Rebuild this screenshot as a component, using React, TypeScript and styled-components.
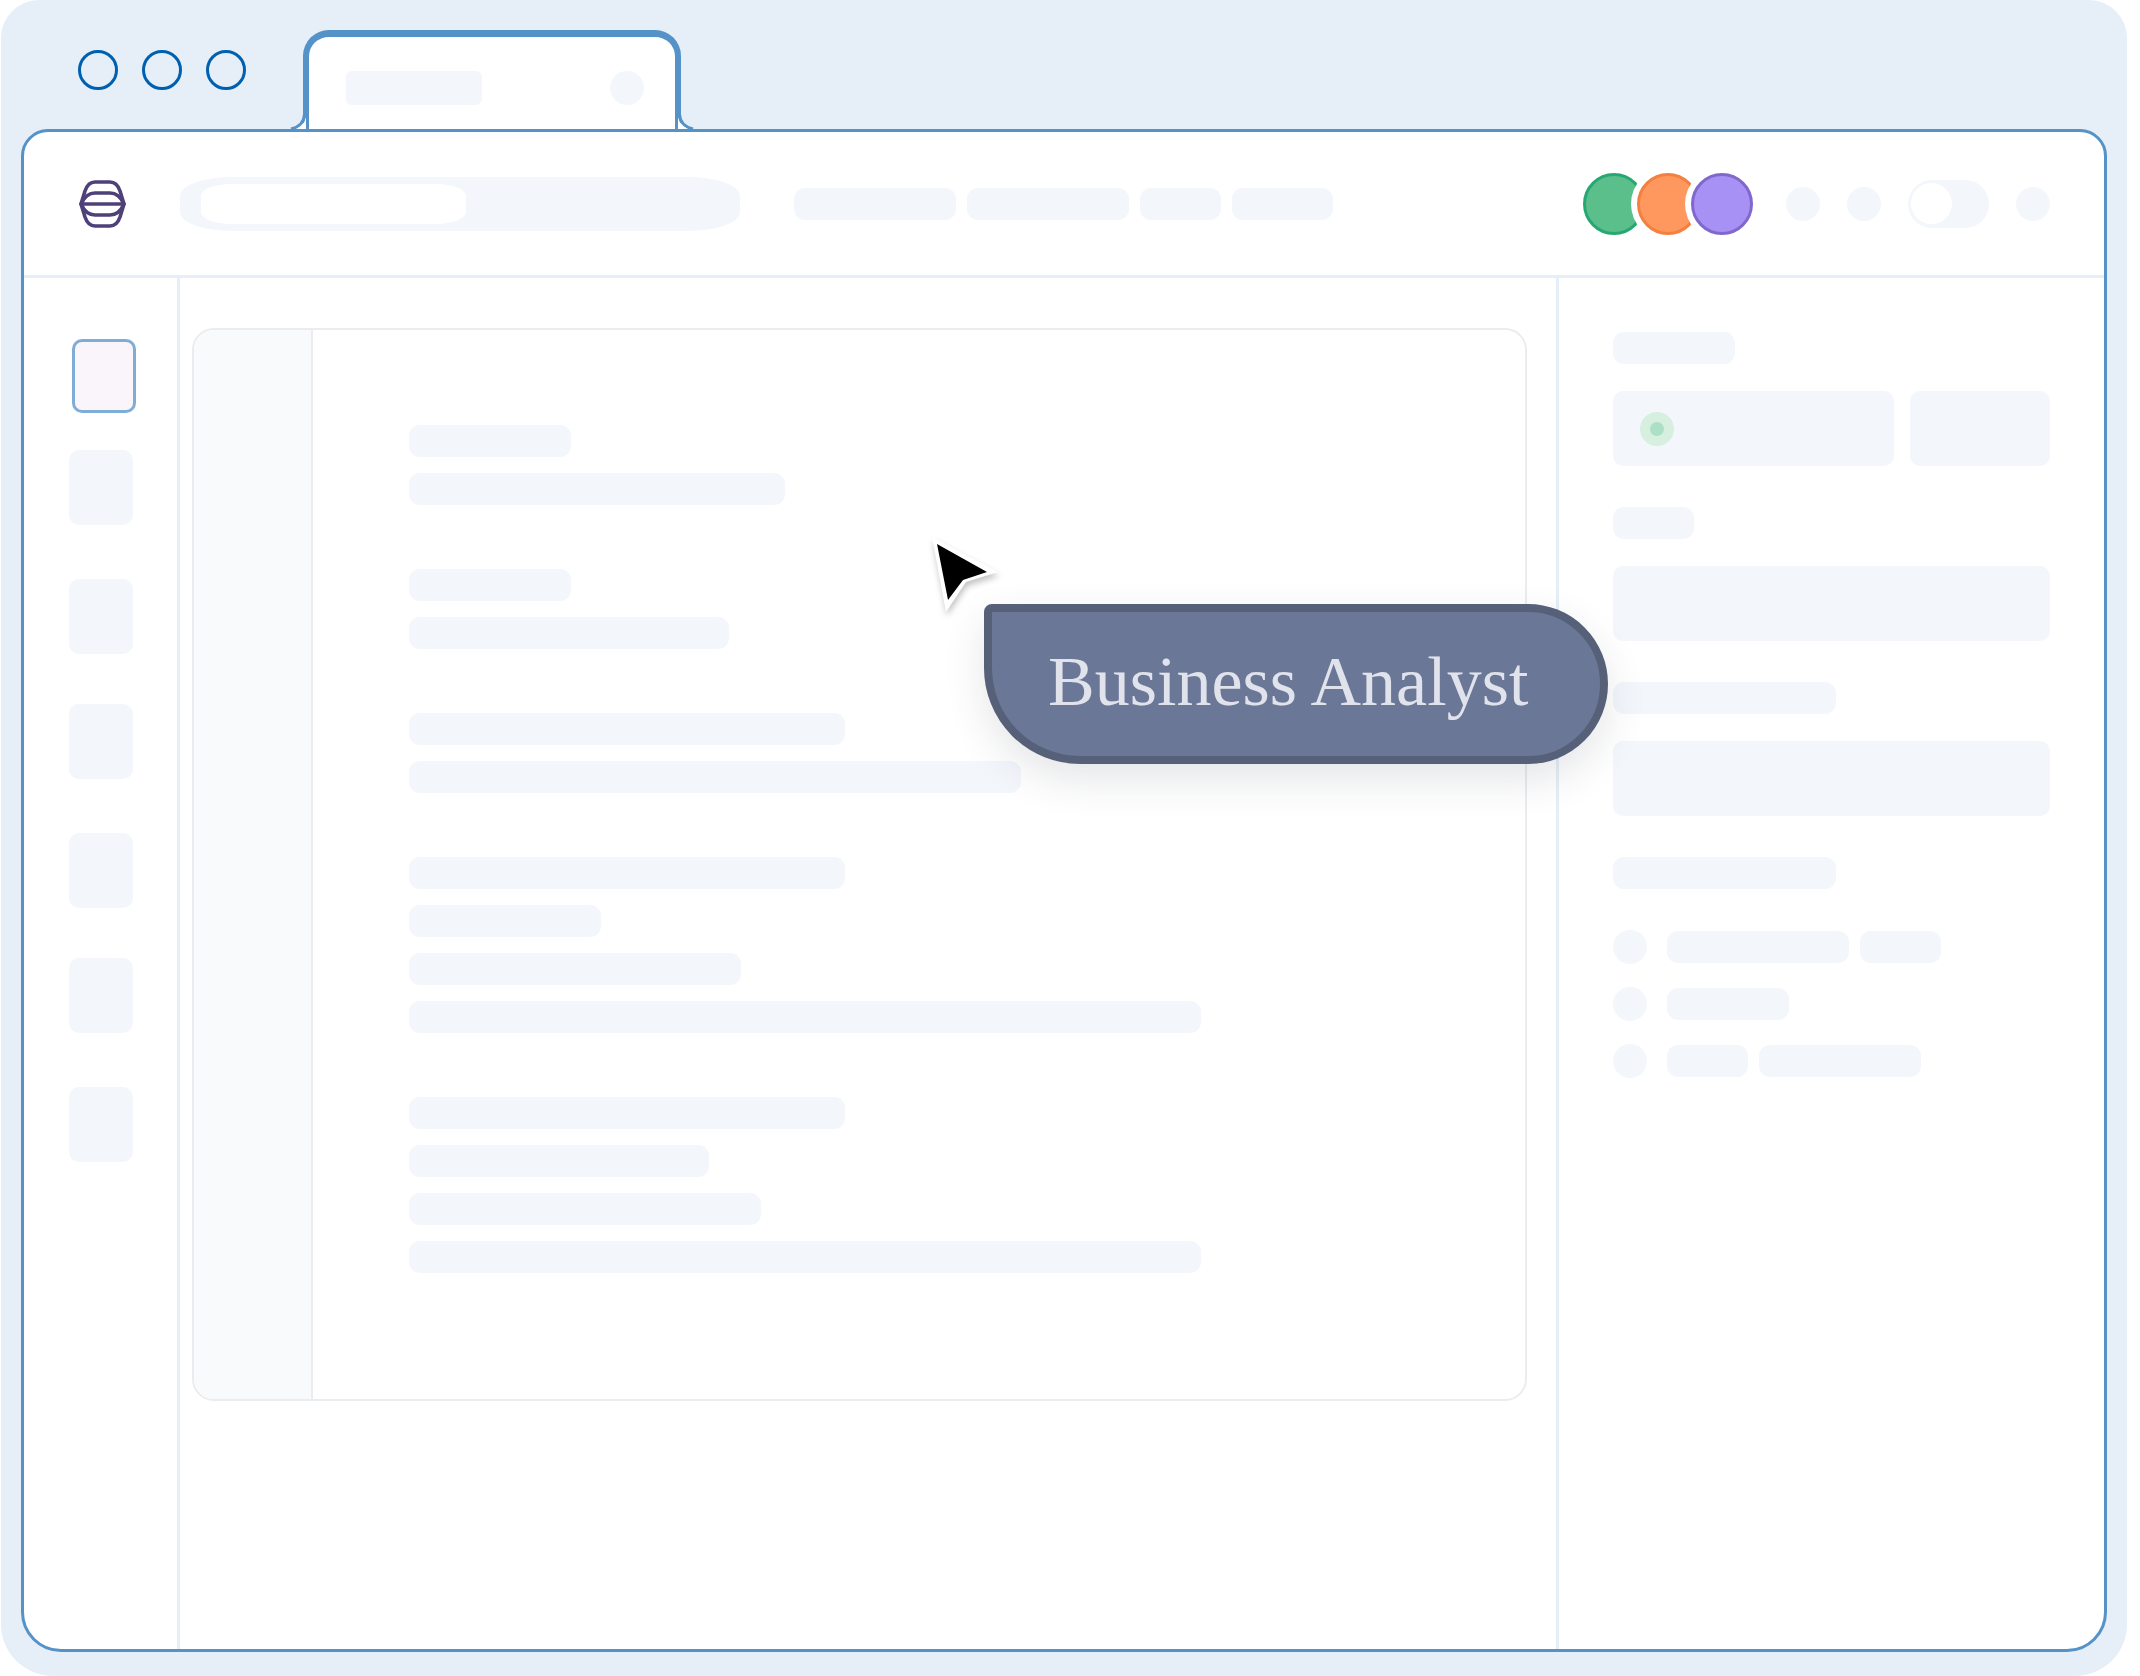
import React from "react";
import styled, { createGlobalStyle } from "styled-components";

const color = {
  frame: "#e6eef7",
  outline: "#5492c8",
  divider: "#e6eff8",
  block: "#f3f6fb",
  hairline: "#ebecf0",
  rail: "#f9fafc",
};

const GlobalStyle = createGlobalStyle`
  *, *::before, *::after { box-sizing: border-box; }
  body { margin: 0; background: #fff; font-family: "Liberation Serif", "Times New Roman", serif; }
  button, input { margin: 0; padding: 0; font: inherit; }
`;

const Frame = styled.div`
  display: flex;
  flex-direction: column;
  min-height: 100vh;
  margin: 0 13px 0 1px;
  padding: 0 20px 24px;
  background: ${color.frame};
  border-radius: 38px 38px 52px 52px;
`;

const TitleBar = styled.div`
  display: flex;
  align-items: flex-end;
  gap: 57px;
  height: 129px;
  padding-left: 57px;
`;

const WindowButtons = styled.div`
  display: flex;
  gap: 24px;
  padding-bottom: 39px;
`;

const WindowButton = styled.button`
  width: 40px;
  height: 40px;
  border: 3px solid #0060b0;
  border-radius: 50%;
  background: transparent;
`;

const Tab = styled.div`
  position: relative;
  display: flex;
  justify-content: space-between;
  align-items: flex-start;
  width: 378px;
  height: 99px;
  padding: 34px 31px 0 37px;
  border: 6px solid ${color.outline};
  border-top-width: 7px;
  border-bottom: 0;
  border-radius: 26px 26px 0 0;
  background: #fff;
`;

const Flare = styled.svg<{ $side: "left" | "right" }>`
  position: absolute;
  bottom: 0;
  ${(p) => p.$side}: -20px;
  width: 17px;
  height: 20px;
  transform: ${(p) => (p.$side === "right" ? "scaleX(-1)" : "none")};
`;

const Window = styled.div`
  display: flex;
  flex-direction: column;
  flex: 1;
  border: 3px solid ${color.outline};
  border-radius: 27px 27px 40px 40px;
  background: #fff;
`;

const Header = styled.header`
  display: flex;
  align-items: center;
  height: 146px;
  padding: 0 54px;
  border-bottom: 3px solid ${color.divider};
`;

const Logo = styled.svg`
  width: 48px;
  height: 48px;
  margin-right: 54px;
`;

const Search = styled.div`
  width: 560px;
  height: 54px;
  padding: 7px 21px;
  border-radius: 52px / 19px;
  background: ${color.block};
`;

const SearchInput = styled.input`
  display: block;
  width: 265px;
  height: 40px;
  border: 0;
  border-radius: 30px / 12px;
  background: #fff;
`;

const Nav = styled.nav`
  display: flex;
  gap: 11px;
  margin-left: 54px;
`;

const Bar = styled.span<{ $w: number }>`
  display: block;
  width: ${(p) => p.$w}px;
  max-width: 100%;
  height: 32px;
  border-radius: 11px;
  background: ${color.block};
`;

const TabTitle = styled(Bar)`
  height: 34px;
  border-radius: 6px;
`;

const Dot = styled.span`
  display: block;
  width: 34px;
  height: 34px;
  flex: none;
  border-radius: 50%;
  background: ${color.block};
`;

const Avatars = styled.div`
  display: flex;
  margin: 0 33px 0 auto;
`;

const Avatar = styled.span<{ $fill: string; $line: string }>`
  width: 62px;
  height: 62px;
  border: 3px solid ${(p) => p.$line};
  border-radius: 50%;
  background: ${(p) => p.$fill};

  & + & {
    margin-left: -8px;
    box-shadow: 0 0 0 6px #fff;
  }
`;

const Actions = styled.div`
  display: flex;
  align-items: center;
  gap: 27px;
`;

const Switch = styled.input`
  appearance: none;
  display: flex;
  align-items: center;
  width: 81px;
  height: 48px;
  padding-left: 3px;
  border-radius: 24px;
  background: ${color.block};

  &::before {
    content: "";
    width: 41px;
    height: 41px;
    border-radius: 50%;
    background: #fff;
  }
  &:checked {
    justify-content: flex-end;
    padding: 0 3px 0 0;
  }
`;

const Body = styled.div`
  display: flex;
  flex: 1;
`;

const Sidebar = styled.aside`
  display: flex;
  flex-direction: column;
  gap: 50px;
  width: 156px;
  padding: 61px 0 0 45px;
  border-right: 3px solid ${color.divider};
`;

const ToolGroup = styled.div`
  display: flex;
  flex-direction: column;
  gap: 54px;
`;

const Tool = styled.button`
  width: 64px;
  height: 75px;
  border: 0;
  border-radius: 10px;
  background: ${color.block};
`;

const ActiveTool = styled(Tool)`
  height: 74px;
  margin: 0 0 -13px 3px;
  border: 3px solid #7fadd6;
  background: #faf5fb;
`;

const Main = styled.main`
  position: relative;
  flex: 1;
  min-width: 0;
  padding: 50px 29px 0 12px;
`;

const Page = styled.section`
  display: flex;
  border: 2px solid ${color.hairline};
  border-radius: 22px;
`;

const Rail = styled.div`
  width: 119px;
  border-right: 2px solid ${color.hairline};
  border-radius: 20px 0 0 20px;
  background: ${color.rail};
`;

const Paragraphs = styled.div`
  display: flex;
  flex-direction: column;
  flex: 1;
  gap: 64px;
  min-width: 0;
  padding: 95px 96px 126px;
`;

const Paragraph = styled.div`
  display: flex;
  flex-direction: column;
  gap: 16px;
`;

const Cursor = styled.svg`
  position: absolute;
  top: 255px;
  left: 748px;
  width: 80px;
  height: 90px;
  filter: drop-shadow(1px 4px 3px rgba(0, 0, 0, 0.24));
`;

const RoleTag = styled.div`
  position: absolute;
  top: 326px;
  left: 804px;
  z-index: 1;
  width: 624px;
  height: 160px;
  padding-left: 56px;
  border: 8px solid #566079;
  border-radius: 8px 80px 80px 96px;
  background: #6b7797;
  box-shadow: 0 16px 40px rgba(40, 46, 66, 0.12);
  color: #e0e3eb;
  font-size: 70px;
  line-height: 140px;
  white-space: nowrap;
`;

const Inspector = styled.aside`
  display: flex;
  flex-direction: column;
  gap: 41px;
  width: 548px;
  padding: 54px 54px 0;
  border-left: 3px solid ${color.divider};
`;

const Field = styled.div`
  display: flex;
  flex-direction: column;
  gap: 27px;
`;

const Boxes = styled.div`
  display: flex;
  gap: 16px;
`;

const Box = styled.div<{ $grow?: number }>`
  display: flex;
  align-items: center;
  flex: ${(p) => p.$grow ?? 1} 1 0;
  height: 75px;
  border-radius: 10px;
  background: ${color.block};
`;

const Status = styled.span`
  width: 34px;
  height: 34px;
  margin-left: 27px;
  border: 10px solid #d7efdf;
  border-radius: 50%;
  background: #acdfc7;
`;

const List = styled.ul`
  display: flex;
  flex-direction: column;
  gap: 23px;
  margin: 0;
  padding: 0;
  list-style: none;
`;

const ListRow = styled.li`
  display: flex;
  align-items: center;
  gap: 11px;

  ${Dot} {
    margin-right: 9px;
  }
`;

const paragraphs = [
  [162, 376],
  [162, 320],
  [436, 612],
  [436, 192, 332, 792],
  [436, 300, 352, 792],
];

const rows = [[182, 81], [122], [81, 162]];

const toolGroups = [
  [2, 3],
  [4, 5],
  [6, 7],
];

function TabFlare({ side }: { side: "left" | "right" }) {
  return (
    <Flare $side={side} viewBox="0 0 17 20" aria-hidden="true">
      <path d="M0 0H14V5Q14 17 2 20H0Z" fill={color.frame} />
      <path d="M17 8V20H4Q15 18 17 8Z" fill="#fff" />
      <path d="M15.5 0V5Q15 17 2 20" fill="none" stroke={color.outline} strokeWidth="3" />
    </Flare>
  );
}

export default function App() {
  return (
    <>
      <GlobalStyle />
      <Frame>
        <TitleBar>
          <WindowButtons>
            <WindowButton aria-label="Close" />
            <WindowButton aria-label="Minimize" />
            <WindowButton aria-label="Maximize" />
          </WindowButtons>
          <Tab>
            <TabFlare side="left" />
            <TabTitle $w={136} />
            <Dot />
            <TabFlare side="right" />
          </Tab>
        </TitleBar>

        <Window>
          <Header>
            <Logo viewBox="0 0 48 48" fill="none" stroke="#4e4079" strokeWidth="3.6" strokeLinejoin="round" aria-hidden="true">
              <path d="M3 24L7 11Q10 2 17 2H32Q39 2 42 11L46 24L42 37Q39 46 32 46H17Q10 46 7 37Z" />
              <path d="M3 24Q8 13 17 13H32Q41 13 46 24Q41 35 32 35H17Q8 35 3 24Z" />
              <path d="M3 24H46" />
            </Logo>
            <Search>
              <SearchInput type="search" aria-label="Search" />
            </Search>
            <Nav>
              <Bar $w={162} />
              <Bar $w={162} />
              <Bar $w={81} />
              <Bar $w={101} />
            </Nav>
            <Avatars>
              <Avatar $fill="#5bbf8b" $line="#27a873" />
              <Avatar $fill="#ff985f" $line="#f57f3f" />
              <Avatar $fill="#a891f5" $line="#8068cc" />
            </Avatars>
            <Actions>
              <Dot />
              <Dot />
              <Switch type="checkbox" role="switch" aria-label="Toggle" />
              <Dot />
            </Actions>
          </Header>

          <Body>
            <Sidebar>
              <ActiveTool aria-label="Tool 1" />
              {toolGroups.map((group) => (
                <ToolGroup key={group[0]}>
                  {group.map((n) => (
                    <Tool key={n} aria-label={`Tool ${n}`} />
                  ))}
                </ToolGroup>
              ))}
            </Sidebar>

            <Main>
              <Page>
                <Rail />
                <Paragraphs>
                  {paragraphs.map((lines, i) => (
                    <Paragraph key={i}>
                      {lines.map((w, j) => (
                        <Bar key={j} $w={w} />
                      ))}
                    </Paragraph>
                  ))}
                </Paragraphs>
              </Page>
              <Cursor viewBox="0 0 80 90" aria-hidden="true">
                <path d="M4 4L70 39L38 49L18 79Z" fill="#fff" />
                <path d="M9 11L59 39L35 47L20 67Z" fill="#000" />
              </Cursor>
              <RoleTag>Business Analyst</RoleTag>
            </Main>

            <Inspector>
              <Field>
                <Bar $w={122} />
                <Boxes>
                  <Box $grow={2}>
                    <Status />
                  </Box>
                  <Box />
                </Boxes>
              </Field>
              <Field>
                <Bar $w={81} />
                <Boxes>
                  <Box />
                </Boxes>
              </Field>
              <Field>
                <Bar $w={223} />
                <Boxes>
                  <Box />
                </Boxes>
              </Field>
              <Bar $w={223} />
              <List>
                {rows.map((widths, i) => (
                  <ListRow key={i}>
                    <Dot />
                    {widths.map((w, j) => (
                      <Bar key={j} $w={w} />
                    ))}
                  </ListRow>
                ))}
              </List>
            </Inspector>
          </Body>
        </Window>
      </Frame>
    </>
  );
}
